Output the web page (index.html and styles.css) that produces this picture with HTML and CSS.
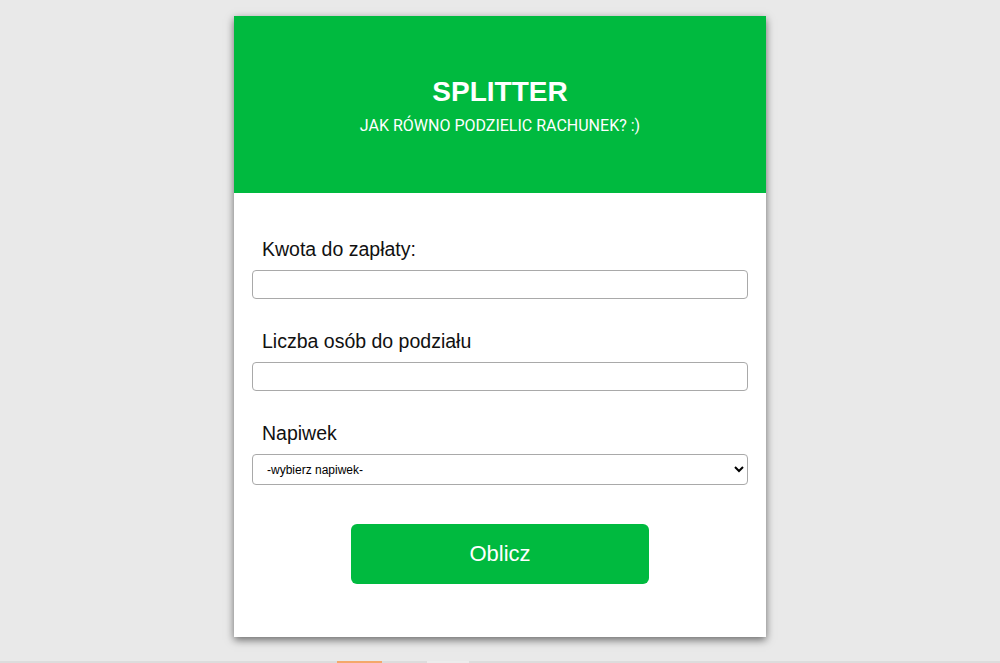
FILE: index.html
```html
<!DOCTYPE html>
<html lang="pl">
<head>
<meta charset="utf-8">
<title>Splitter</title>
<link rel="stylesheet" href="styles.css">
</head>
<body>
<div class="card">
  <header class="head">
    <h1 class="title">SPLITTER</h1>
    <p class="subtitle">JAK RÓWNO PODZIELIC RACHUNEK? :)</p>
  </header>
  <form class="form">
    <div class="field">
      <label class="label" for="price">Kwota do zapłaty:</label>
      <input class="input" id="price" type="number">
    </div>
    <div class="field">
      <label class="label" for="people">Liczba osób do podziału</label>
      <input class="input" id="people" type="number">
    </div>
    <div class="field">
      <label class="label" for="tip">Napiwek</label>
      <select class="select" id="tip">
        <option>-wybierz napiwek-</option>
      </select>
    </div>
    <div class="actions">
      <button class="btn" type="button">Oblicz</button>
    </div>
  </form>
</div>
<div class="strip"><span class="s1"></span><span class="s2"></span></div>
</body>
</html>
```
FILE: styles.css
```css
* { box-sizing: border-box; }
html, body { margin: 0; padding: 0; }
body {
  background: #e9e9e9;
  font-family: "Liberation Sans", Arial, sans-serif;
  height: 663px;
  overflow: hidden;
  position: relative;
}
.card {
  width: 532px;
  margin: 16px auto 0;
  background: #fff;
  box-shadow: 0 3px 8px rgba(0,0,0,0.55);
}
.head {
  background: #00ba3f;
  height: 177px;
  color: #fff;
  text-align: center;
  padding-top: 60px;
}
.title {
  margin: 0;
  font-family: "Liberation Sans", Arial, sans-serif;
  font-weight: bold;
  font-size: 28px;
  line-height: 32px;
}
.subtitle {
  margin: 8px 0 0;
  font-family: Roboto, "Liberation Sans", sans-serif;
  font-size: 16px;
  line-height: 19px;
}
.form {
  padding: 45px 18px 53px;
}
.field {
  display: flex;
  flex-direction: column;
  margin-bottom: 31px;
}
.label {
  padding-left: 10px;
  font-size: 19.5px;
  line-height: 23px;
  color: #111;
  margin-bottom: 9px;
}
.input {
  height: 29px;
  width: 100%;
  border: 1px solid #a9a9a9;
  border-radius: 4px;
  background: #fff;
}
.select {
  height: 31px;
  width: 100%;
  border: 1px solid #a9a9a9;
  border-radius: 4px;
  background: #fff;
  font-family: "Liberation Sans", Arial, sans-serif;
  font-size: 12px;
  padding-left: 10px;
  color: #000;
}
.actions {
  display: flex;
  justify-content: center;
  padding-top: 8px;
}
.btn {
  width: 298px;
  height: 60px;
  border: none;
  border-radius: 6px;
  background: #00ba3f;
  color: #fff;
  font-family: "Liberation Sans", Arial, sans-serif;
  font-size: 22px;
}
.strip {
  position: absolute;
  left: 0;
  right: 0;
  bottom: 0;
  height: 2px;
  background: #dcdcdc;
}
.strip .s1 {
  position: absolute;
  left: 337px;
  width: 45px;
  height: 2px;
  background: #f4a86a;
}
.strip .s2 {
  position: absolute;
  left: 427px;
  width: 42px;
  height: 2px;
  background: #ececec;
}
```
